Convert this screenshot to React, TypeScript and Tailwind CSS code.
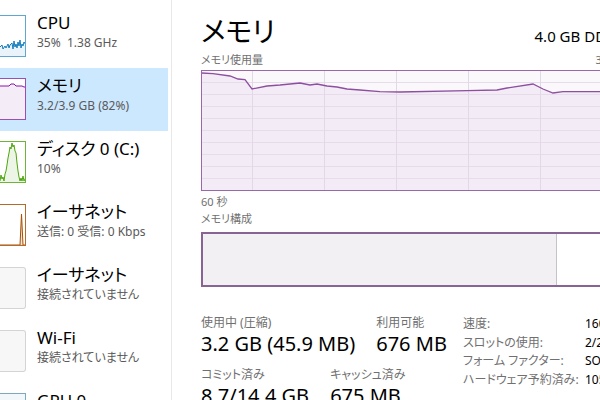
import React from "react";

type Item = {
  title: string;
  sub: string;
  kind: "cpu" | "mem" | "disk" | "eth" | "off" | "gpu";
  selected?: boolean;
};

const items: Item[] = [
  { title: "CPU", sub: "35%  1.38 GHz", kind: "cpu" },
  { title: "メモリ", sub: "3.2/3.9 GB (82%)", kind: "mem", selected: true },
  { title: "ディスク 0 (C:)", sub: "10%", kind: "disk" },
  { title: "イーサネット", sub: "送信: 0 受信: 0 Kbps", kind: "eth" },
  { title: "イーサネット", sub: "接続されていません", kind: "off" },
  { title: "Wi-Fi", sub: "接続されていません", kind: "off" },
  { title: "GPU 0", sub: "Intel(R) HD Graphics", kind: "gpu" },
];

const spark: Record<string, { pts: string; stroke: string; fill: string; border: string }> = {
  cpu: {
    pts: "0,32 2,30 3,34 5,31 6,33 8,29 9,33 10,30 12,28 13,34 14,26 15,32 16,29 17,33 18,27 19,31 20,25 21,33 22,29 23,31 24,27 26,30",
    stroke: "#117dbb",
    fill: "#eaf3fa",
    border: "#5fa6d3",
  },
  mem: {
    pts: "0,8 9,8 11,6 14,6 16,8 22,8 24,9 26,9",
    stroke: "#8b12ae",
    fill: "#f4ecf7",
    border: "#9a4fb2",
  },
  disk: {
    pts: "0,40 1,34 2,38 3,36 4,40 5,33 6,30 7,24 8,17 9,12 10,6 11,8 12,2 13,6 14,4 15,10 16,12 17,22 18,30 19,36 20,40 21,37 22,40 23,35 24,40 26,36",
    stroke: "#4da60c",
    fill: "#edf6e6",
    border: "#6cb43a",
  },
  eth: {
    pts: "0,41 20,41 21.5,10 23,41 26,41",
    stroke: "#a74f01",
    fill: "#f4e4d4",
    border: "#b36a2a",
  },
};

function Thumb({ kind }: { kind: Item["kind"] }) {
  if (kind === "off" || kind === "gpu") {
    return (
      <div
        className={
          kind === "off"
            ? "mt-[10px] h-[42px] w-[26px] shrink-0 rounded-r-[3px] border-y border-r border-[#d4d4d4] bg-[#f7f7f7]"
            : "mt-[10px] h-[42px] w-[26px] shrink-0 border-y border-r border-[#7fa7bf] bg-[#f2f7fa]"
        }
      />
    );
  }
  const s = spark[kind];
  return (
    <svg width="26" height="42" viewBox="0 0 26 42" className="mt-[10px] shrink-0">
      <rect x="-5" y="0" width="31" height="42" fill="#ffffff" />
      <polygon points={`0,42 ${s.pts} 26,42`} fill={s.fill} />
      <polyline points={s.pts} fill="none" stroke={s.stroke} strokeWidth="1" />
      <rect x="-5" y="0.5" width="30.5" height="41" fill="none" stroke={s.border} strokeWidth="1" />
    </svg>
  );
}

const usage =
  "0.7,3 12,3.7 29,6 37,9 44,9.7 51,19 66,16 79,15 99,13 109,15 116,14 126,16 136,17 146,19 159,20 179,21.7 199,22 266,20.7 296,20 306,18 332,14 342,19 352,23 362,21.7 399,21.7 423,21.5";

function UsageChart() {
  const vx = [51, 123, 195, 267, 339, 411];
  const hy = [12, 24, 36, 48, 60, 72, 84, 96, 108];
  return (
    <svg width="423" height="121" viewBox="0 0 423 121" className="block">
      <rect x="0" y="0" width="423" height="121" fill="#fbf8fc" />
      <polygon points={`0.7,121 ${usage} 423,121`} fill="#f3ebf6" />
      {hy.map((y) => (
        <line key={y} x1="0" x2="423" y1={y + 0.5} y2={y + 0.5} stroke="#e6dcea" strokeWidth="1" />
      ))}
      {vx.map((x) => (
        <line key={x} x1={x + 0.5} x2={x + 0.5} y1="0" y2="121" stroke="#e2d8e6" strokeWidth="1" />
      ))}
      <polyline points={usage} fill="none" stroke="#8d4f9f" strokeWidth="1.3" />
      <rect x="0.5" y="0.5" width="422" height="120" fill="none" stroke="#9a68a8" strokeWidth="1" />
    </svg>
  );
}

export default function App() {
  return (
    <div className="flex h-[400px] w-[600px] overflow-hidden bg-white font-['Noto_Sans','Noto_Sans_CJK_JP',sans-serif] text-black [font-feature-settings:'palt']">
      {/* sidebar */}
      <div className="flex w-[172px] shrink-0 flex-col border-r border-[#e8e8e8] pt-[5px]">
        {items.map((it, i) => (
          <div
            key={i}
            className={`flex h-[63px] w-[168px] shrink-0 items-start ${it.selected ? "bg-[#cce8ff]" : ""}`}
          >
            <Thumb kind={it.kind} />
            <div className="ml-[11px] pt-[8px]">
              <div className="whitespace-nowrap text-[17px] leading-[20px]">{it.title}</div>
              <div className="mt-[2px] whitespace-pre text-[12px] leading-[16px] text-[#5a5a5a]">{it.sub}</div>
            </div>
          </div>
        ))}
      </div>

      {/* main */}
      <div className="shrink-0 pl-[29px] pt-[11px]">
        <div className="w-[423px]">
          <div className="flex items-baseline justify-between">
            <h1 className="text-[28px] leading-[40px]">メモリ</h1>
            <span className="whitespace-nowrap text-[15px]">4.0 GB DDR3</span>
          </div>
          <div className="mt-[2px] flex w-[428px] justify-between text-[11px] leading-[14px] text-[#707070]">
            <span>メモリ使用量</span>
            <span>3.9 GB</span>
          </div>
          <div className="mt-[3px]">
            <UsageChart />
          </div>
          <div className="mt-[4px] text-[11px] leading-[14px] text-[#707070]">60 秒</div>
          <div className="mt-[3px] text-[11px] leading-[14px] text-[#707070]">メモリ構成</div>
          <div className="mt-[6px] flex h-[55px] border-y-2 border-l-2 border-[#876493]">
            <div className="w-[354px] border-r border-[#c9c0cd] bg-[#f3f0f4]" />
            <div className="flex-1 bg-white" />
          </div>

          <div className="mt-[28px] flex items-start">
            <div className="flex w-[262px] shrink-0 flex-col gap-[10px]">
              <div className="flex gap-[21px]">
                <div>
                  <div className="text-[12px] leading-[16px] text-[#707070]">使用中 (圧縮)</div>
                  <div className="whitespace-nowrap text-[20px] leading-[26px]">3.2 GB (45.9 MB)</div>
                </div>
                <div>
                  <div className="text-[12px] leading-[16px] text-[#707070]">利用可能</div>
                  <div className="whitespace-nowrap text-[20px] leading-[26px]">676 MB</div>
                </div>
              </div>
              <div className="flex gap-[21px]">
                <div>
                  <div className="text-[12px] leading-[16px] text-[#707070]">コミット済み</div>
                  <div className="whitespace-nowrap text-[20px] leading-[26px]">8.7/14.4 GB</div>
                </div>
                <div>
                  <div className="text-[12px] leading-[16px] text-[#707070]">キャッシュ済み</div>
                  <div className="whitespace-nowrap text-[20px] leading-[26px]">675 MB</div>
                </div>
              </div>
            </div>
            <div className="grid grid-cols-[122px_auto] content-start text-[12px] leading-[18.5px]">
              <span className="text-[#707070]">速度:</span>
              <span className="whitespace-nowrap">1600 MHz</span>
              <span className="text-[#707070]">スロットの使用:</span>
              <span className="whitespace-nowrap">2/2</span>
              <span className="text-[#707070]">フォーム ファクター:</span>
              <span className="whitespace-nowrap">SODIMM</span>
              <span className="whitespace-nowrap text-[#707070]">ハードウェア予約済み:</span>
              <span className="whitespace-nowrap">105 MB</span>
            </div>
          </div>
        </div>
      </div>
    </div>
  );
}
